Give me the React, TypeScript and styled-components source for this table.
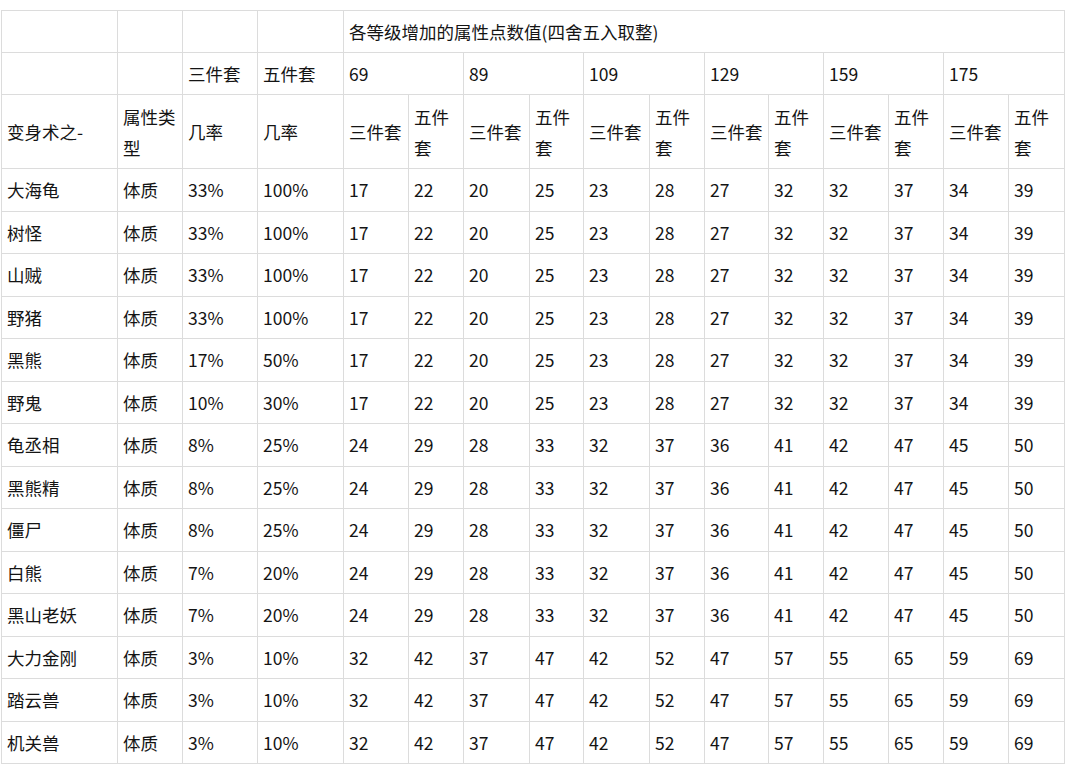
import React from 'react';
import styled, { createGlobalStyle } from 'styled-components';

const GlobalStyle = createGlobalStyle`
  html, body {
    margin: 0;
    padding: 0;
    background: #ffffff;
  }
  body {
    padding: 10px 0 0 1px;
    font-family: "Noto Sans CJK SC", "Noto Sans", sans-serif;
    color: #141414;
  }
`;

const Table = styled.table`
  width: 1063px;
  table-layout: fixed;
  border-collapse: collapse;
  font-size: 17.5px;
  line-height: 31px;
`;

const Row = styled.tr<{ $h: number }>`
  height: ${(p) => p.$h}px;
`;

const Cell = styled.td`
  border: 1px solid #dcdcdc;
  padding: 5px 3px 5px 5px;
  vertical-align: middle;
  text-align: left;
  font-weight: 400;
  word-break: break-all;
`;

const widths = [116, 65, 75, 86, 65, 55, 66, 54, 66, 55, 64, 55, 65, 55, 65, 56];
const levels = ['69', '89', '109', '129', '159', '175'];

const setA = ['17', '22', '20', '25', '23', '28', '27', '32', '32', '37', '34', '39'];
const setB = ['24', '29', '28', '33', '32', '37', '36', '41', '42', '47', '45', '50'];
const setC = ['32', '42', '37', '47', '42', '52', '47', '57', '55', '65', '59', '69'];

const rows: [string, string, string, string[]][] = [
  ['大海龟', '33%', '100%', setA],
  ['树怪', '33%', '100%', setA],
  ['山贼', '33%', '100%', setA],
  ['野猪', '33%', '100%', setA],
  ['黑熊', '17%', '50%', setA],
  ['野鬼', '10%', '30%', setA],
  ['龟丞相', '8%', '25%', setB],
  ['黑熊精', '8%', '25%', setB],
  ['僵尸', '8%', '25%', setB],
  ['白熊', '7%', '20%', setB],
  ['黑山老妖', '7%', '20%', setB],
  ['大力金刚', '3%', '10%', setC],
  ['踏云兽', '3%', '10%', setC],
  ['机关兽', '3%', '10%', setC],
];

const App: React.FC = () => {
  return (
    <>
      <GlobalStyle />
      <Table>
        <colgroup>
          {widths.map((w, i) => (
            <col key={i} style={{ width: w }} />
          ))}
        </colgroup>
        <tbody>
          <Row $h={42}>
            <Cell />
            <Cell />
            <Cell />
            <Cell />
            <Cell colSpan={12}>各等级增加的属性点数值(四舍五入取整)</Cell>
          </Row>
          <Row $h={42}>
            <Cell />
            <Cell />
            <Cell>三件套</Cell>
            <Cell>五件套</Cell>
            {levels.map((l) => (
              <Cell key={l} colSpan={2}>
                {l}
              </Cell>
            ))}
          </Row>
          <Row $h={74}>
            <Cell>变身术之-</Cell>
            <Cell>属性类型</Cell>
            <Cell>几率</Cell>
            <Cell>几率</Cell>
            {levels.map((l) => (
              <React.Fragment key={l}>
                <Cell>三件套</Cell>
                <Cell>五件套</Cell>
              </React.Fragment>
            ))}
          </Row>
          {rows.map(([name, p3, p5, vals]) => (
            <Row $h={42.5} key={name}>
              <Cell>{name}</Cell>
              <Cell>体质</Cell>
              <Cell>{p3}</Cell>
              <Cell>{p5}</Cell>
              {vals.map((v, i) => (
                <Cell key={i}>{v}</Cell>
              ))}
            </Row>
          ))}
        </tbody>
      </Table>
    </>
  );
};

export default App;
